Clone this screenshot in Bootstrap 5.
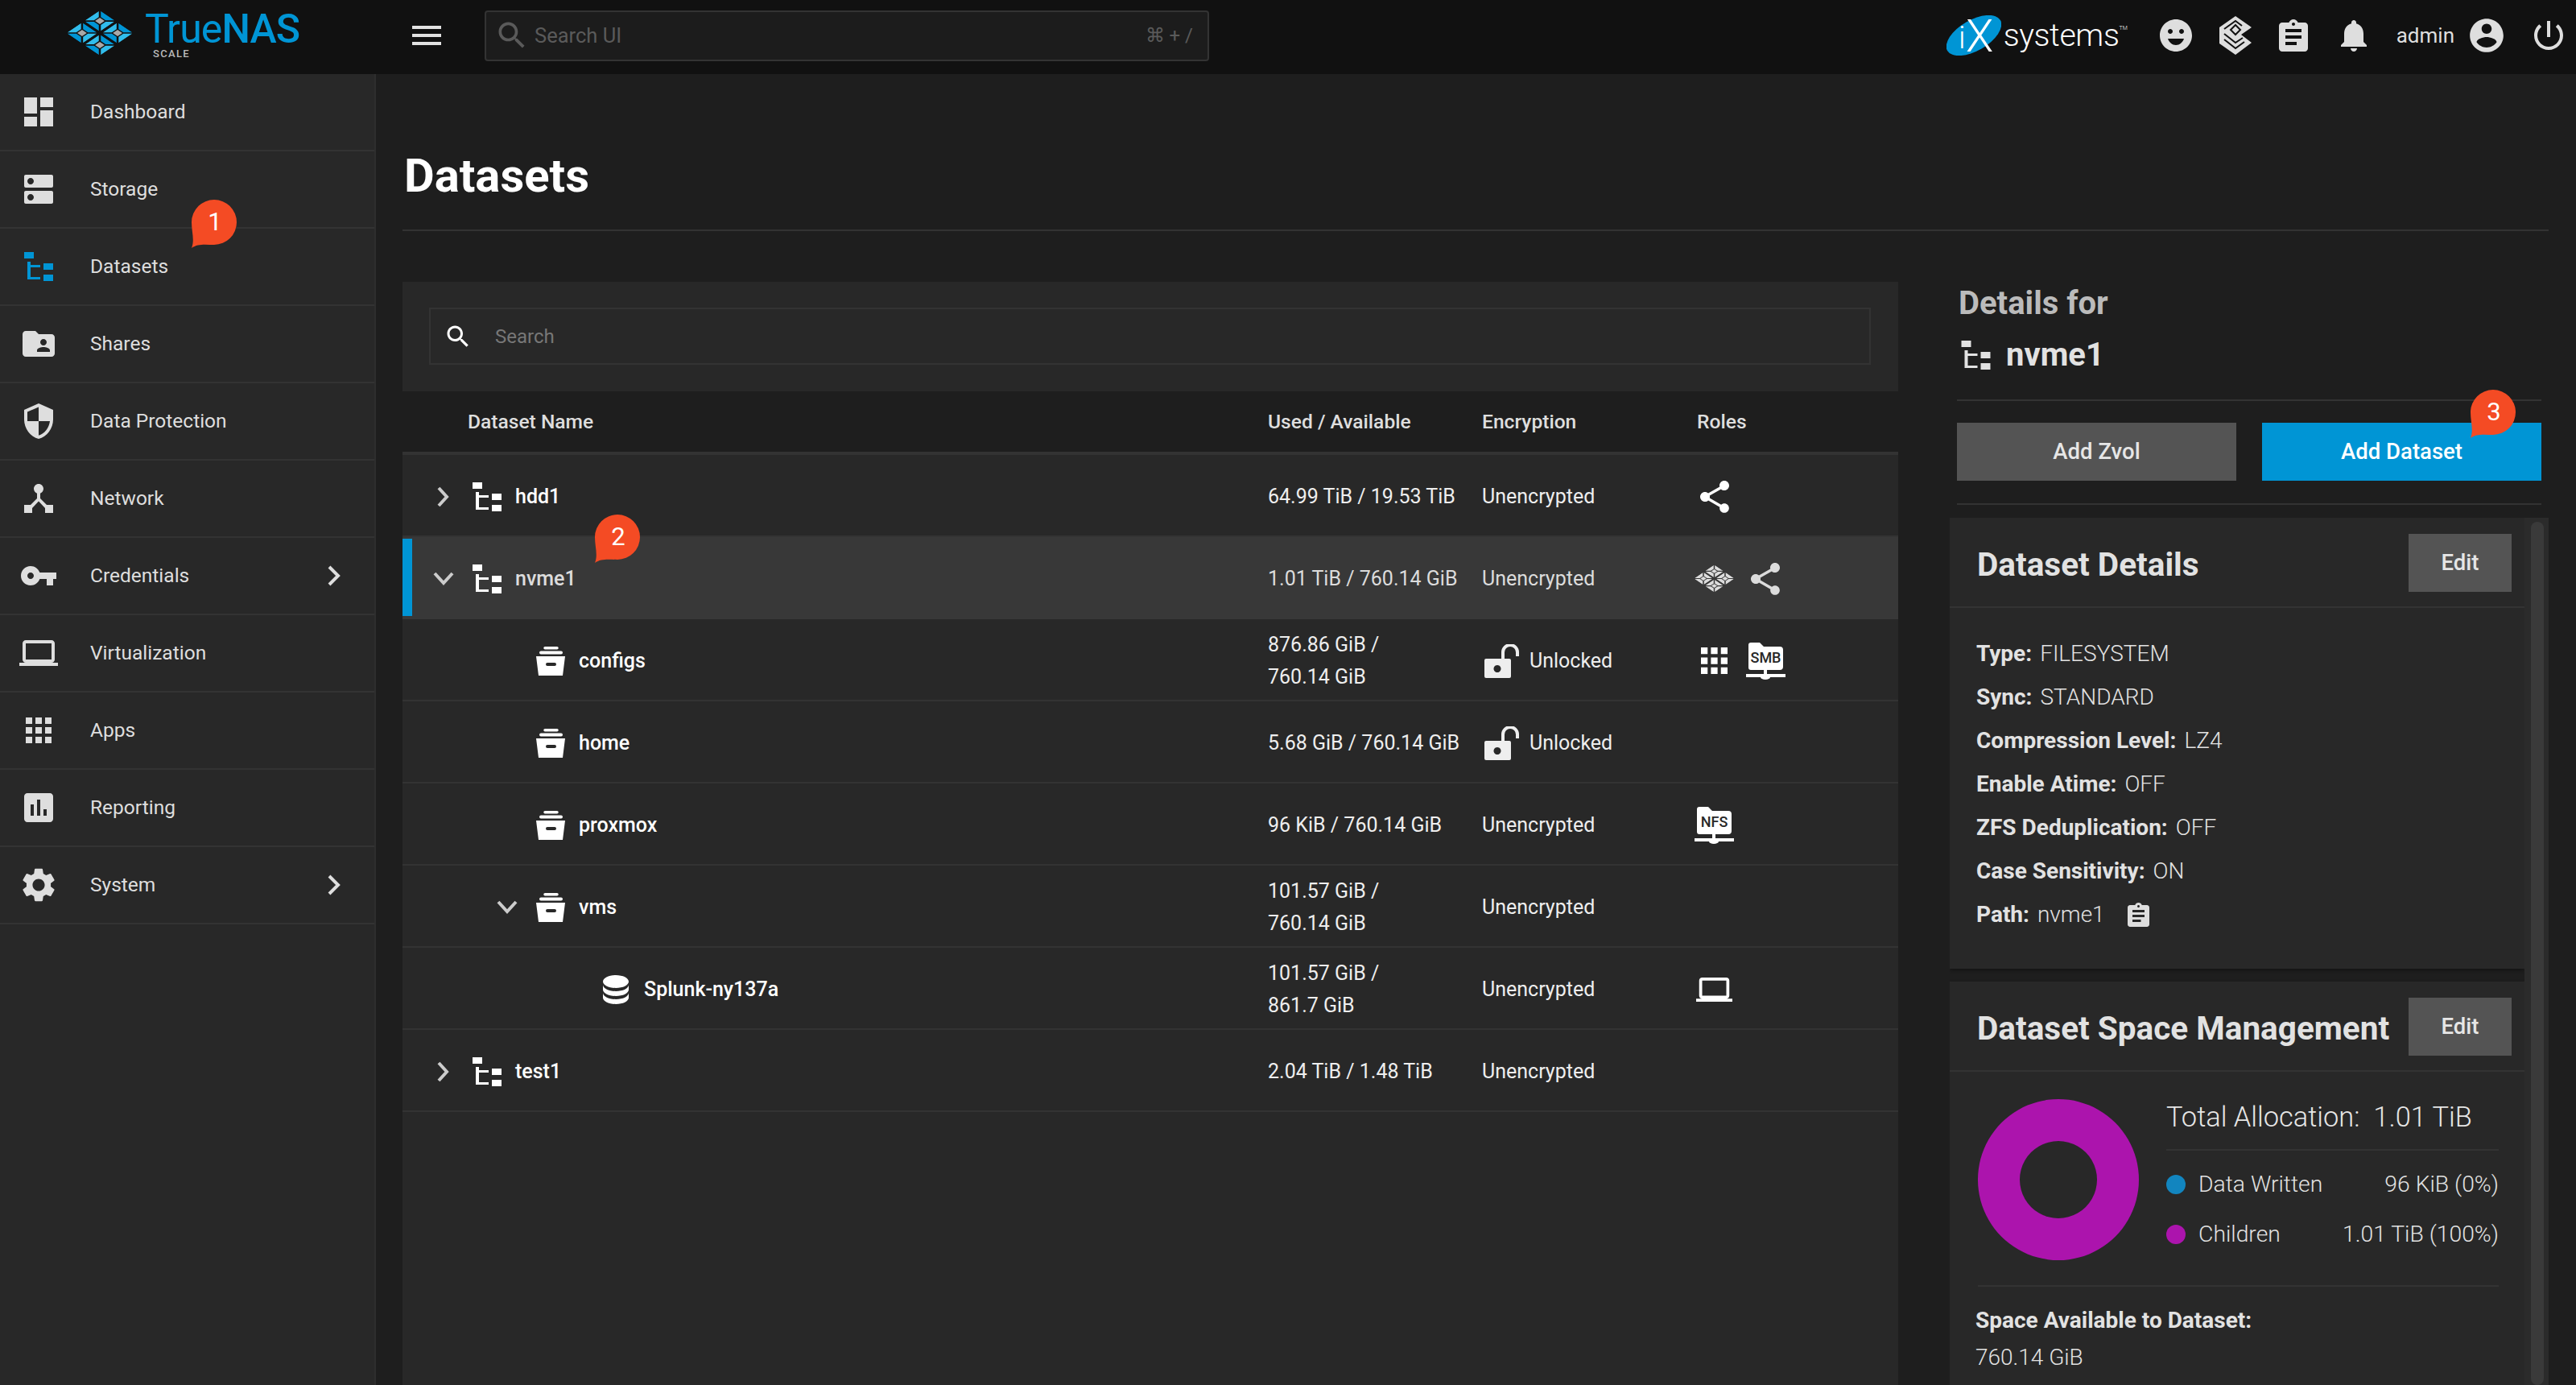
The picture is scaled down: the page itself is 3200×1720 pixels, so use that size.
<!DOCTYPE html>
<html lang="en">
<head>
<meta charset="utf-8">
<title>TrueNAS Datasets</title>
<link href="https://cdn.jsdelivr.net/npm/bootstrap@5.3.0/dist/css/bootstrap.min.css" rel="stylesheet">
<style>
html,body{margin:0;width:3200px;height:1720px;overflow:hidden}
body{position:relative;background:#1e1e1e;color:#dedede;font-family:Roboto,"Liberation Sans",sans-serif;font-size:24px;--lite:#31bdec;--dark:#0095d5;--core:#a8a8a8}
svg{display:block;fill:currentColor;flex:none}
.mono{--lite:currentColor;--dark:currentColor;--core:currentColor}
.topbar{height:92px;background:#111}
.brand{width:467px;padding-left:84px;flex:none}
.brand>svg{margin-bottom:10px}
.brand-word{position:relative;margin-left:16px;width:195px;height:70px}
.brand-name{position:absolute;left:0;top:0;font:400 50px/50px Roboto,sans-serif;color:#0095d5;letter-spacing:-.9px;white-space:nowrap}
.brand-name b{font-weight:500}
.brand-sub{position:absolute;left:10px;top:50px;font:500 13px/11px Roboto,sans-serif;letter-spacing:1.3px;color:#bbb}
.burger{margin:0 0 4px 39px;width:48px;height:48px;color:#e2e2e2}
.topsearch{margin:0 0 4px 48px;width:900px;height:63px;border:2px solid #333;border-radius:4px;background:#1c1c1c;color:#5a5a5a;padding:0 18px 0 10px;font-size:25.5px}
.topsearch .lbl{margin-left:6px}
.topsearch .keys{font-size:24px}
.ix{margin:0 0 4px auto}
.ix-word{font:300 39.4px/50px Roboto,sans-serif;color:#fff;margin-left:3px;letter-spacing:-.4px;white-space:nowrap}
.ix-word sup{font-size:7px;top:-20px;letter-spacing:0}
.topicons{color:#dedede;margin:0 10px 4px 36px}
.admin{font-size:26px;color:#dedede}
.m29{margin-left:29px}.m33{margin-left:33px}.m15{margin-left:15px}.m28{margin-left:28px}
.shell{height:1628px}
.sidenav{width:467px;background:#282828;border-right:2px solid #2e2e2e}
.navitem{height:96px;border-bottom:2px solid #333;padding:0 41px 0 30px;color:#dedede;font-size:24.5px}
.navitem .lbl{margin-left:46px}
.nslot{width:36px;display:flex;justify-content:center;align-items:center;color:#dedede}
.navitem.on .nslot{color:#0095d5}
.pagearea{padding:0 34px 0 33px;min-width:0}
.pagetitle{height:195px;padding:58px 0 0 2px;border-bottom:2px solid #333;font:700 58px/1 Roboto,sans-serif;color:#fff}
.workrow{margin-top:63px;height:1370px}
.treepanel{width:1858px;background:#282828}
.treesearch{height:136px;padding:32px 33px 33px}
.treeinput{height:71px;width:1791px;border:2px solid #333;color:#777;padding-left:16px;font-size:24px}
.treeinput .lbl{margin-left:28px}
.treeinput svg{color:#fff}
.gridrow{display:grid;grid-template-columns:1075px 266px 267px 1fr;position:relative}
.headrow{height:79px;padding-top:2px;background:#1e1e1e;border-bottom:4px solid #333;align-items:center;font-weight:500;color:#dedede;font-size:24.6px}
.headrow>div:first-child{padding-left:81px}
.bodyrow{height:102px;padding-top:3px;border-bottom:2px solid #333;align-items:center;color:#eee;font-size:25px}
.bodyrow.sel{background:#383838;border-bottom-color:#383838;color:#dcdcdc}
.bodyrow.sel::before{content:"";position:absolute;left:0;top:2px;bottom:2px;width:12px;background:#0095d5}
.namecell{font-weight:500;color:#fff}
.sel .namecell{color:#dcdcdc}
.lv0{padding-left:36px}.lv1{padding-left:115px}.lv2{padding-left:196px}
.chev{width:30px;height:30px;margin-right:21px;color:#ccc}
.chev svg{fill:none;stroke:currentColor;stroke-width:4;margin:auto}
.nicon{width:36px;height:36px;color:#fff}
.namecell .txt{margin-left:17px}
.usedcell{line-height:40px}
.enccell svg{margin-left:3px}
.enccell .unl{margin-left:13px}
.rolecell{color:#fff;gap:15px;margin-left:-3px}
.rolecell.two{gap:21px}
.sel .rolecell{color:#dcdcdc}
.rolebox{width:49px}
.tagtxt{font:500 18px Roboto,sans-serif;fill:#282828}
.detailcol{width:744px}
.dethead{margin:0 9px;height:148px;border-bottom:2px solid #333;font:700 40px/1 Roboto,sans-serif}
.dethead .ttl{color:#bbb;padding-top:7px;height:71px;margin-left:2px}
.dethead .sub{color:#e2e2e2;margin-left:5px}
.dethead .sub span{margin-left:19px}
.detbtns{margin:0 9px;height:129px;border-bottom:2px solid #333;padding-top:27px;gap:32px}
.actbtn{flex:1;height:72px;border:0;border-radius:0;font:500 27.5px/72px Roboto,sans-serif;padding:0;color:#e6e6e6;background:#545454}
.actbtn.prim{background:#0095d5;color:#fff}
.cardscroll{margin-top:16px;height:1077px;overflow:hidden}
.cardcol{width:714px}
.infocard{background:#282828;box-shadow:0 2px 4px rgba(0,0,0,.35)}
.cardtop{height:112px;border-bottom:2px solid #333;padding:0 16px 0 34px}
.cardttl{font:700 40.5px/1 Roboto,sans-serif;color:#e2e2e2;margin-top:7px;white-space:nowrap}
.editbtn{width:128px;height:72px;margin-top:2px;background:#545454;color:#e6e6e6;font:500 27.5px/72px Roboto,sans-serif;border:0;border-radius:0;padding:0}
.firstcard{height:560px}
.secondcard{margin-top:16px;height:501px}
.kvlist{padding:30px 0 0 33px}
.kvrow{height:54px;font-size:28px;font-weight:300;color:#e2e2e2}
.kvrow b{font-weight:700;margin-right:10px}
.kvrow svg{margin-left:28px;color:#dedede}
.spacebox{margin:0 32px 0 35px;border-bottom:2px solid #333;height:267px}
.donut{width:200px;height:200px;margin-top:34px;fill:#ac14ad}
.spacecol{margin:25px 0 0 34px;width:413px}
.totalrow{height:73px;border-bottom:2px solid #333;font-size:34.4px;font-weight:300;color:#e6e6e6;padding-bottom:8px}
.totalrow span{margin-left:17px}
.legendset{padding-top:11px}
.legrow{height:62px;font-size:28.3px;font-weight:300;color:#e2e2e2}
.legdot{width:24px;height:24px;border-radius:50%;margin-right:16px}
.dotblue{background:#1285bf}.dotpurp{background:#ac14ad}
.availt{padding:19px 0 0 32px;font:700 28px/45px Roboto,sans-serif;color:#e2e2e2}
.availv{margin-top:1px;padding-left:32px;font:300 28px/45px Roboto,sans-serif;color:#e2e2e2}
.sbar{width:30px;background:#2b2b2b;padding:5px 6px 0 8px}
.sthumb{height:100%;background:#3a3a3a;border-radius:8px}
.callout{position:absolute;width:58px;height:60px;color:#f44b24}
.callout svg{position:absolute;inset:0}
.callout span{position:absolute;left:1px;top:0;width:58px;line-height:56px;text-align:center;color:#fff;font-size:31px;font-weight:400}
.c1{left:237px;top:248px}.c2{left:738px;top:639px}.c3{left:3068px;top:484px}
.navchev{fill:none;stroke:#dedede;stroke-width:4;margin-left:auto}
</style>
</head>
<body>
<svg width="0" height="0" class="position-absolute">
<defs>
<symbol id="cell" viewBox="0 0 46 46"><polygon points="3,0 43,0 30,13 16,13" fill="var(--dark)"/><polygon points="46,3 46,43 33,30 33,16" fill="var(--lite)"/><polygon points="43,46 3,46 16,33 30,33" fill="var(--dark)"/><polygon points="0,43 0,3 13,16 13,30" fill="var(--lite)"/><rect x="16" y="16" width="14" height="14" fill="var(--core)"/></symbol>
<symbol id="logo" viewBox="0 0 80 54"><g transform="translate(40 27) scale(.6 .405) rotate(45) translate(-49 -49)"><use href="#cell" width="46" height="46"/><use href="#cell" x="52" width="46" height="46"/><use href="#cell" y="52" width="46" height="46"/><use href="#cell" x="52" y="52" width="46" height="46"/></g></symbol>
<symbol id="tree" viewBox="0 0 36 36"><path d="M0 0h12v8H0zM24 14h12v8H24zM24 28h12v8H24zM4 12h4v4h12v3H8v12h12v3H4z"/></symbol>
<symbol id="bucket" viewBox="0 0 36 36"><path fill-rule="evenodd" d="M11 0h15a1.700 1.700 0 0 1 0 3.500H11A1.700 1.700 0 0 1 11 0zM6 5.500h25a2 2 0 0 1 0 4H6a2 2 0 0 1 0-4zM0 12h36l-3 24H3zM14 20a2 2 0 0 0 0 4h9a2 2 0 0 0 0-4z"/></symbol>
<symbol id="db" viewBox="4 3 16 18"><path d="M12,3C7.58,3 4,4.79 4,7C4,9.21 7.58,11 12,11C16.42,11 20,9.21 20,7C20,4.79 16.42,3 12,3M4,9V12C4,14.21 7.58,16 12,16C16.42,16 20,14.21 20,12V9C20,11.21 16.42,13 12,13C7.58,13 4,11.21 4,9M4,14V17C4,19.21 7.58,21 12,21C16.42,21 20,19.21 20,17V14C20,16.21 16.42,18 12,18C7.58,18 4,16.21 4,14Z"/></symbol>
<symbol id="share" viewBox="3 2 18 20"><path d="M18 16.080c-.76 0-1.440.3-1.960.77L8.910 12.700c.05-.23.09-.46.09-.7s-.04-.47-.09-.7l7.050-4.110c.54.5 1.250.81 2.040.81 1.660 0 3-1.340 3-3s-1.340-3-3-3-3 1.340-3 3c0 .24.04.47.09.7L8.040 9.810C7.500 9.310 6.790 9 6 9c-1.660 0-3 1.340-3 3s1.340 3 3 3c.79 0 1.500-.31 2.040-.81l7.120 4.160c-.05.21-.08.43-.08.65 0 1.610 1.310 2.920 2.920 2.920 1.610 0 2.920-1.310 2.920-2.920s-1.310-2.920-2.920-2.920z"/></symbol>
<symbol id="apps" viewBox="4 4 16 16"><path d="M4 8h4V4H4v4zm6 12h4v-4h-4v4zm-6 0h4v-4H4v4zm0-6h4v-4H4v4zm6 0h4v-4h-4v4zm6-10v4h4V4h-4zm-6 4h4V4h-4v4zm6 6h4v-4h-4v4zm0 6h4v-4h-4v4z"/></symbol>
<symbol id="laptop" viewBox="0 4 24 16"><path d="M20 18c1.100 0 1.990-.9 1.990-2L22 6c0-1.100-.9-2-2-2H4c-1.100 0-2 .9-2 2v10c0 1.100.9 2 2 2H0v2h24v-2h-4zM4 6h16v10H4V6z"/></symbol>
<symbol id="unlock" viewBox="0 0 43 42"><path fill-rule="evenodd" d="M2 18h29a2 2 0 0 1 2 2v20a2 2 0 0 1-2 2H2a2 2 0 0 1-2-2V20a2 2 0 0 1 2-2zM16 26a4.500 4.500 0 1 0 .01 0z"/><path d="M23 19V10a9 9 0 0 1 18 0v5" fill="none" stroke="currentColor" stroke-width="4"/></symbol>
<symbol id="clip" viewBox="3 1 18 20"><path d="M19 3h-4.180C14.400 1.840 13.300 1 12 1c-1.300 0-2.400.84-2.820 2H5c-1.100 0-2 .9-2 2v14c0 1.100.9 2 2 2h14c1.100 0 2-.9 2-2V5c0-1.100-.9-2-2-2zm-7 0c.55 0 1 .45 1 1s-.45 1-1 1-1-.45-1-1 .45-1 1-1zm2 14H7v-2h7v2zm3-4H7v-2h10v2zm0-4H7V7h10v2z"/></symbol>
<symbol id="folder-net" viewBox="0 0 49 46"><path d="M3 3a3 3 0 0 1 3-3h11l5 5h20a4 4 0 0 1 4 4v21a4 4 0 0 1-4 4H6a3 3 0 0 1-3-3z"/><path d="M22 33h4v6h23v4H30a6 3 0 0 1-12 0H0v-4h22z"/></symbol>
<symbol id="bubble" viewBox="0 0 58 60"><path d="M1 60C5 50 1 40 1 28A28 28 0 1 1 29 56C20 56 9 54 1 60Z"/></symbol>
</defs>
</svg>

<header class="topbar d-flex align-items-center">
  <div class="brand d-flex align-items-center">
    <svg width="80" height="54"><use href="#logo"/></svg>
    <div class="brand-word"><div class="brand-name">True<b>NAS</b></div><div class="brand-sub">SCALE</div></div>
  </div>
  <svg class="burger" viewBox="0 0 24 24"><path d="M3 18h18v-2H3v2zm0-5h18v-2H3v2zm0-7v2h18V6H3z"/></svg>
  <div class="topsearch d-flex align-items-center">
    <svg width="44" height="44" viewBox="0 0 24 24"><path d="M15.500 14h-.79l-.28-.27C15.410 12.590 16 11.110 16 9.500 16 5.910 13.090 3 9.500 3S3 5.910 3 9.500 5.910 16 9.500 16c1.610 0 3.090-.59 4.230-1.570l.27.28v.79l5 4.990L20.490 19l-4.990-5zm-6 0C7.010 14 5 11.990 5 9.500S7.010 5 9.500 5 14 7.010 14 9.500 11.990 14 9.500 14z"/></svg>
    <span class="lbl">Search UI</span>
    <span class="ms-auto keys">⌘ + /</span>
  </div>
  <div class="ix d-flex align-items-center">
    <svg width="68" height="50" viewBox="0 0 68 50"><ellipse cx="34" cy="25" rx="38" ry="19" transform="rotate(-30 34 25)" fill="#0095d5"/><text x="15" y="41" font-family="Roboto,sans-serif" font-size="38" font-weight="300" fill="#fff">i</text><text x="24" y="45" font-family="Roboto,sans-serif" font-size="56" font-weight="300" fill="#fff">X</text></svg>
    <div class="ix-word">systems<sup>TM</sup></div>
  </div>
  <div class="topicons d-flex align-items-center">
    <svg width="48" height="48" viewBox="0 0 24 24"><path d="M11.990 2C6.470 2 2 6.480 2 12s4.470 10 9.990 10C17.520 22 22 17.520 22 12S17.520 2 11.990 2zM8.500 8c.83 0 1.500.67 1.500 1.500S9.330 11 8.500 11 7 10.330 7 9.500 7.670 8 8.500 8zM12 18c-2.280 0-4.220-1.660-5-4h10c-.78 2.340-2.720 4-5 4zm3.500-7c-.83 0-1.500-.67-1.500-1.500S14.670 8 15.500 8s1.500.67 1.500 1.500-.67 1.500-1.500 1.500z"/></svg>
    <svg class="m29" width="42" height="48" viewBox="0 0 42 48"><polygon points="21,0 41,14 28,23 41,33 21,48 1,34 1,14"/><path d="M21 11l6 6-6 6-6-6zM7 22l14 11 9-6M7 29l14 11 11-8M7 16L21 6l8 6" fill="none" stroke="#111" stroke-width="2"/></svg>
    <svg class="m33" width="36" height="40"><use href="#clip"/></svg>
    <svg class="m33" width="48" height="48" viewBox="0 0 24 24"><path d="M12 22c1.100 0 2-.9 2-2h-4c0 1.100.9 2 2 2zm6-6v-5c0-3.070-1.630-5.640-4.500-6.320V4c0-.83-.67-1.500-1.500-1.500s-1.500.67-1.500 1.500v.68C7.640 5.360 6 7.920 6 11v5l-2 2v1h16v-1l-2-2z"/></svg>
    <span class="admin m29">admin</span>
    <svg class="m15" width="50" height="50" viewBox="0 0 24 24"><path d="M12 2C6.480 2 2 6.480 2 12s4.480 10 10 10 10-4.480 10-10S17.520 2 12 2zm0 3c1.660 0 3 1.340 3 3s-1.340 3-3 3-3-1.340-3-3 1.340-3 3-3zm0 14.200c-2.500 0-4.710-1.280-6-3.220.03-1.990 4-3.080 6-3.080 1.990 0 5.970 1.090 6 3.080-1.290 1.940-3.500 3.220-6 3.220z"/></svg>
    <svg class="m28" width="48" height="48" viewBox="0 0 24 24"><path d="M13 3h-2v10h2V3zm4.830 2.170l-1.420 1.420C17.990 7.860 19 9.810 19 12c0 3.870-3.130 7-7 7s-7-3.130-7-7c0-2.190 1.010-4.140 2.580-5.420L6.170 5.170C4.230 6.820 3 9.260 3 12c0 4.970 4.030 9 9 9s9-4.030 9-9c0-2.740-1.230-5.180-3.170-6.830z"/></svg>
  </div>
</header>

<div class="shell d-flex">
  <nav class="sidenav flex-shrink-0">
    <div class="navitem d-flex align-items-center"><span class="nslot"><svg width="36" height="36" viewBox="3 3 18 18"><path d="M3 13h8V3H3v10zm0 8h8v-6H3v6zm10 0h8V11h-8v10zm0-18v6h8V3h-8z"/></svg></span><span class="lbl">Dashboard</span></div>
    <div class="navitem d-flex align-items-center"><span class="nslot"><svg width="36" height="36" viewBox="3 3 18 18"><path d="M20 13H4c-.55 0-1 .45-1 1v6c0 .55.45 1 1 1h16c.55 0 1-.45 1-1v-6c0-.55-.45-1-1-1zM7 19c-1.100 0-2-.9-2-2s.9-2 2-2 2 .9 2 2-.9 2-2 2zM20 3H4c-.55 0-1 .45-1 1v6c0 .55.45 1 1 1h16c.55 0 1-.45 1-1V4c0-.55-.45-1-1-1zM7 9c-1.100 0-2-.9-2-2s.9-2 2-2 2 .9 2 2-.9 2-2 2z"/></svg></span><span class="lbl">Storage</span></div>
    <div class="navitem on d-flex align-items-center"><span class="nslot"><svg width="36" height="36"><use href="#tree"/></svg></span><span class="lbl">Datasets</span></div>
    <div class="navitem d-flex align-items-center"><span class="nslot"><svg width="40" height="32" viewBox="2 4 20 16"><path d="M20 6h-8l-2-2H4c-1.100 0-1.990.9-1.990 2L2 18c0 1.100.9 2 2 2h16c1.100 0 2-.9 2-2V8c0-1.100-.9-2-2-2zm-5 3c1.100 0 2 .9 2 2s-.9 2-2 2-2-.9-2-2 .9-2 2-2zm4 8h-8v-1c0-1.330 2.670-2 4-2s4 .67 4 2v1z"/></svg></span><span class="lbl">Shares</span></div>
    <div class="navitem d-flex align-items-center"><span class="nslot"><svg width="36" height="44" viewBox="3 1 18 22" preserveAspectRatio="none"><path d="M12 1L3 5v6c0 5.550 3.840 10.740 9 12 5.160-1.260 9-6.450 9-12V5l-9-4zm0 10.990h7c-.53 4.120-3.280 7.790-7 8.940V12H5V6.300l7-3.110v8.800z"/></svg></span><span class="lbl">Data Protection</span></div>
    <div class="navitem d-flex align-items-center"><span class="nslot"><svg width="36" height="36" viewBox="3 3 18 18"><path d="M17 16l-4-4V8.820C14.160 8.400 15 7.300 15 6c0-1.660-1.340-3-3-3S9 4.340 9 6c0 1.300.84 2.400 2 2.820V12l-4 4H3v5h5v-3.050l4-4.200 4 4.200V21h5v-5h-4z"/></svg></span><span class="lbl">Network</span></div>
    <div class="navitem d-flex align-items-center"><span class="nslot"><svg width="44" height="24" viewBox="1 6 22 12"><path d="M12.650 10C11.830 7.670 9.610 6 7 6c-3.310 0-6 2.690-6 6s2.690 6 6 6c2.610 0 4.830-1.670 5.650-4H17v4h4v-4h2v-4H12.650zM7 14c-1.100 0-2-.9-2-2s.9-2 2-2 2 .9 2 2-.9 2-2 2z"/></svg></span><span class="lbl">Credentials</span><svg class="navchev" width="18" height="28" viewBox="0 0 18 28"><path d="M3 3l11 11L3 25"/></svg></div>
    <div class="navitem d-flex align-items-center"><span class="nslot"><svg width="48" height="32"><use href="#laptop"/></svg></span><span class="lbl">Virtualization</span></div>
    <div class="navitem d-flex align-items-center"><span class="nslot"><svg width="32" height="32"><use href="#apps"/></svg></span><span class="lbl">Apps</span></div>
    <div class="navitem d-flex align-items-center"><span class="nslot"><svg width="36" height="36" viewBox="3 3 18 18"><path d="M19 3H5c-1.100 0-2 .9-2 2v14c0 1.100.9 2 2 2h14c1.100 0 2-.9 2-2V5c0-1.100-.9-2-2-2zM9 17H7v-7h2v7zm4 0h-2V7h2v10zm4 0h-2v-4h2v4z"/></svg></span><span class="lbl">Reporting</span></div>
    <div class="navitem d-flex align-items-center"><span class="nslot"><svg width="42" height="42" viewBox="2.400 2 19.200 20"><path d="M19.140 12.940c.04-.3.06-.61.06-.94 0-.32-.02-.64-.07-.94l2.030-1.580c.18-.14.23-.41.12-.61l-1.920-3.320c-.12-.22-.37-.29-.59-.22l-2.390.96c-.5-.38-1.030-.7-1.620-.94l-.36-2.540c-.04-.24-.24-.41-.48-.41h-3.840c-.24 0-.43.17-.47.41l-.36 2.540c-.59.24-1.130.57-1.620.94l-2.390-.96c-.22-.08-.47 0-.59.22L2.740 8.870c-.12.21-.08.47.12.61l2.030 1.580c-.05.3-.09.63-.09.94s.02.64.07.94l-2.030 1.580c-.18.14-.23.41-.12.61l1.920 3.320c.12.22.37.29.59.22l2.390-.96c.5.38 1.030.7 1.620.94l.36 2.540c.05.24.24.41.48.41h3.840c.24 0 .44-.17.47-.41l.36-2.540c.59-.24 1.130-.56 1.620-.94l2.390.96c.22.08.47 0 .59-.22l1.920-3.320c.12-.22.07-.47-.12-.61l-2.010-1.580zM12 15.600c-1.980 0-3.600-1.620-3.600-3.600s1.620-3.600 3.600-3.600 3.600 1.620 3.600 3.600-1.620 3.600-3.600 3.600z"/></svg></span><span class="lbl">System</span><svg class="navchev" width="18" height="28" viewBox="0 0 18 28"><path d="M3 3l11 11L3 25"/></svg></div>
  </nav>

  <main class="pagearea flex-grow-1">
    <div class="pagetitle d-flex align-items-center">Datasets</div>
    <div class="workrow d-flex">
      <section class="treepanel flex-shrink-0">
        <div class="treesearch">
          <div class="treeinput d-flex align-items-center"><svg width="36" height="36" viewBox="0 0 24 24"><path d="M15.500 14h-.79l-.28-.27C15.410 12.590 16 11.110 16 9.500 16 5.910 13.090 3 9.500 3S3 5.910 3 9.500 5.910 16 9.500 16c1.610 0 3.090-.59 4.230-1.570l.27.28v.79l5 4.990L20.490 19l-4.990-5zm-6 0C7.010 14 5 11.990 5 9.500S7.010 5 9.500 5 14 7.010 14 9.500 11.990 14 9.500 14z"/></svg><span class="lbl">Search</span></div>
        </div>
        <div class="gridrow headrow"><div>Dataset Name</div><div>Used / Available</div><div>Encryption</div><div>Roles</div></div>

        <div class="gridrow bodyrow">
          <div class="namecell lv0 d-flex align-items-center"><span class="chev d-flex"><svg width="18" height="26" viewBox="0 0 18 26"><path d="M3 2l10 11L3 24"/></svg></span><svg class="nicon"><use href="#tree"/></svg><span class="txt">hdd1</span></div>
          <div>64.99 TiB / 19.53 TiB</div><div>Unencrypted</div>
          <div class="rolecell d-flex align-items-center"><div class="rolebox d-flex justify-content-center"><svg width="36" height="40"><use href="#share"/></svg></div></div>
        </div>
        <div class="gridrow bodyrow sel">
          <div class="namecell lv0 d-flex align-items-center"><span class="chev d-flex"><svg width="26" height="18" viewBox="0 0 26 18"><path d="M2 2l11 12L24 2"/></svg></span><svg class="nicon"><use href="#tree"/></svg><span class="txt">nvme1</span></div>
          <div>1.01 TiB / 760.14 GiB</div><div>Unencrypted</div>
          <div class="rolecell two d-flex align-items-center"><svg class="mono" width="49" height="33"><use href="#logo"/></svg><svg width="36" height="40"><use href="#share"/></svg></div>
        </div>
        <div class="gridrow bodyrow">
          <div class="namecell lv1 d-flex align-items-center"><span class="chev"></span><svg class="nicon"><use href="#bucket"/></svg><span class="txt">configs</span></div>
          <div class="usedcell">876.86 GiB /<br>760.14 GiB</div>
          <div class="enccell d-flex align-items-center"><svg width="43" height="42"><use href="#unlock"/></svg><span class="unl">Unlocked</span></div>
          <div class="rolecell d-flex align-items-center"><div class="rolebox d-flex justify-content-center"><svg width="33" height="33"><use href="#apps"/></svg></div>
            <svg width="49" height="46" viewBox="0 0 49 46"><use href="#folder-net" width="49" height="46"/><text x="24.500" y="25" text-anchor="middle" class="tagtxt">SMB</text></svg></div>
        </div>
        <div class="gridrow bodyrow">
          <div class="namecell lv1 d-flex align-items-center"><span class="chev"></span><svg class="nicon"><use href="#bucket"/></svg><span class="txt">home</span></div>
          <div>5.68 GiB / 760.14 GiB</div>
          <div class="enccell d-flex align-items-center"><svg width="43" height="42"><use href="#unlock"/></svg><span class="unl">Unlocked</span></div>
          <div></div>
        </div>
        <div class="gridrow bodyrow">
          <div class="namecell lv1 d-flex align-items-center"><span class="chev"></span><svg class="nicon"><use href="#bucket"/></svg><span class="txt">proxmox</span></div>
          <div>96 KiB / 760.14 GiB</div><div>Unencrypted</div>
          <div class="rolecell d-flex align-items-center"><svg width="49" height="46" viewBox="0 0 49 46"><use href="#folder-net" width="49" height="46"/><text x="24.500" y="25" text-anchor="middle" class="tagtxt">NFS</text></svg></div>
        </div>
        <div class="gridrow bodyrow">
          <div class="namecell lv1 d-flex align-items-center"><span class="chev d-flex"><svg width="26" height="18" viewBox="0 0 26 18"><path d="M2 2l11 12L24 2"/></svg></span><svg class="nicon"><use href="#bucket"/></svg><span class="txt">vms</span></div>
          <div class="usedcell">101.57 GiB /<br>760.14 GiB</div><div>Unencrypted</div><div></div>
        </div>
        <div class="gridrow bodyrow">
          <div class="namecell lv2 d-flex align-items-center"><span class="chev"></span><svg class="nicon" viewBox="0 0 36 36"><use href="#db" x="1" width="34" height="36"/></svg><span class="txt">Splunk-ny137a</span></div>
          <div class="usedcell">101.57 GiB /<br>861.7 GiB</div><div>Unencrypted</div>
          <div class="rolecell d-flex align-items-center"><svg width="49" height="30"><use href="#laptop"/></svg></div>
        </div>
        <div class="gridrow bodyrow">
          <div class="namecell lv0 d-flex align-items-center"><span class="chev d-flex"><svg width="18" height="26" viewBox="0 0 18 26"><path d="M3 2l10 11L3 24"/></svg></span><svg class="nicon"><use href="#tree"/></svg><span class="txt">test1</span></div>
          <div>2.04 TiB / 1.48 TiB</div><div>Unencrypted</div><div></div>
        </div>
      </section>

      <aside class="detailcol ms-auto">
        <div class="dethead">
          <div class="ttl">Details for</div>
          <div class="sub d-flex align-items-center"><svg width="37" height="36"><use href="#tree"/></svg><span>nvme1</span></div>
        </div>
        <div class="detbtns d-flex align-items-start">
          <button class="btn actbtn" type="button">Add Zvol</button>
          <button class="btn actbtn prim" type="button">Add Dataset</button>
        </div>
        <div class="cardscroll d-flex">
          <div class="cardcol">
            <div class="infocard firstcard">
              <div class="cardtop d-flex align-items-center justify-content-between"><div class="cardttl">Dataset Details</div><button class="btn editbtn" type="button">Edit</button></div>
              <div class="kvlist">
                <div class="kvrow d-flex align-items-center"><b>Type:</b>FILESYSTEM</div>
                <div class="kvrow d-flex align-items-center"><b>Sync:</b>STANDARD</div>
                <div class="kvrow d-flex align-items-center"><b>Compression Level:</b>LZ4</div>
                <div class="kvrow d-flex align-items-center"><b>Enable Atime:</b>OFF</div>
                <div class="kvrow d-flex align-items-center"><b>ZFS Deduplication:</b>OFF</div>
                <div class="kvrow d-flex align-items-center"><b>Case Sensitivity:</b>ON</div>
                <div class="kvrow d-flex align-items-center"><b>Path:</b>nvme1<svg width="27" height="30"><use href="#clip"/></svg></div>
              </div>
            </div>
            <div class="infocard secondcard">
              <div class="cardtop d-flex align-items-center justify-content-between"><div class="cardttl">Dataset Space Management</div><button class="btn editbtn" type="button">Edit</button></div>
              <div class="spacebox d-flex">
                <svg class="donut" viewBox="0 0 200 200"><path fill-rule="evenodd" d="M100 0a100 100 0 1 1-.01 0zM100 52a48 48 0 1 0 .01 0z"/></svg>
                <div class="spacecol">
                  <div class="totalrow d-flex align-items-center">Total Allocation:<span>1.01 TiB</span></div>
                  <div class="legendset">
                    <div class="legrow d-flex align-items-center"><i class="legdot dotblue"></i>Data Written<span class="ms-auto">96 KiB (0%)</span></div>
                    <div class="legrow d-flex align-items-center"><i class="legdot dotpurp"></i>Children<span class="ms-auto">1.01 TiB (100%)</span></div>
                  </div>
                </div>
              </div>
              <div class="availt">Space Available to Dataset:</div>
              <div class="availv">760.14 GiB</div>
            </div>
          </div>
          <div class="sbar"><div class="sthumb"></div></div>
        </div>
      </aside>
    </div>
  </main>
</div>

<div class="callout c1"><svg width="58" height="60"><use href="#bubble"/></svg><span>1</span></div>
<div class="callout c2"><svg width="58" height="60"><use href="#bubble"/></svg><span>2</span></div>
<div class="callout c3"><svg width="58" height="60"><use href="#bubble"/></svg><span>3</span></div>

<script src="https://cdn.jsdelivr.net/npm/bootstrap@5.3.0/dist/js/bootstrap.bundle.min.js"></script>
</body>
</html>
